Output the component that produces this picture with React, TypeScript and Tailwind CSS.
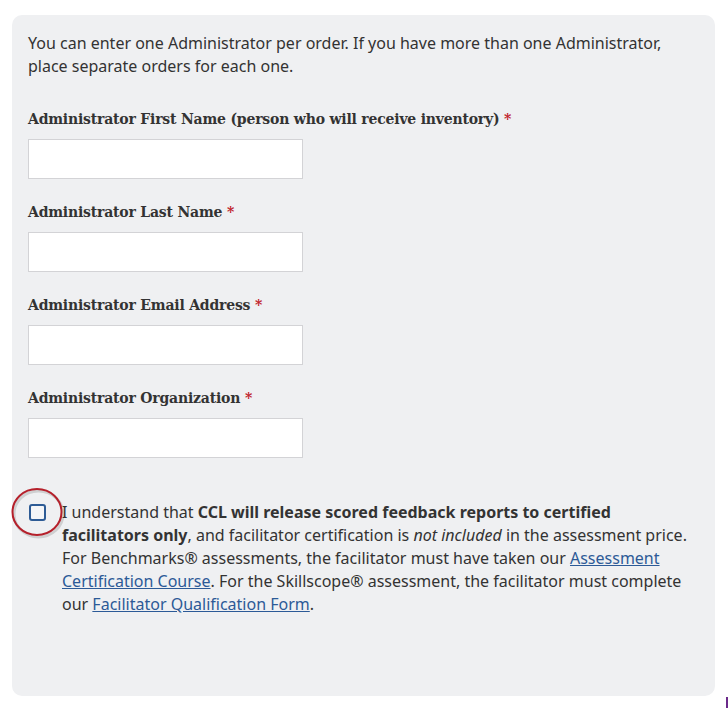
import React from "react"

const labels = [
    "Administrator First Name (person who will receive inventory)",
    "Administrator Last Name",
    "Administrator Email Address",
    "Administrator Organization",
]

const Field: React.FC<{label: string}> = ({label}) => {
    return (
        <div className="flex flex-col">
            <label className="font-['DejaVu_Serif',serif] font-bold text-[14px] leading-[23px] tracking-[-0.2px] text-[#333333]">
                {label} <span className="text-[#c0202a]">*</span>
            </label>
            <input
                type="text"
                className="mt-[8px] h-[40px] w-[275px] bg-white border border-[#d3d3d6] outline-none"
            />
        </div>
    )
}

export default function App() {
    return (
        <div className="relative min-h-[708px] bg-white pl-[12px] pt-[15px] pr-[13px] font-['Noto_Sans',sans-serif] text-[#333333]">
            <div className="h-[681px] w-[703px] rounded-[10px] bg-[#eff0f2] px-[16px] pt-[17px]">
                <p className="text-[16px] leading-[23px]">
                    You can enter one Administrator per order. If you have more than one Administrator, place separate orders for each one.
                </p>

                <div className="mt-[30px] flex flex-col gap-[22px]">
                    {labels.map((l) => (
                        <Field key={l} label={l} />
                    ))}
                </div>

                <div className="mt-[43px] flex items-start gap-[16px]">
                    <div className="relative mt-[3px] ml-[1px] shrink-0">
                        <div className="h-[17px] w-[17px] rounded-[3px] border-2 border-[#2d5b95] bg-[#f4f5f7]" />
                        <svg
                            className="absolute -left-[20px] -top-[19px] pointer-events-none"
                            width="58"
                            height="56"
                            viewBox="0 0 58 56"
                        >
                            <ellipse cx="28" cy="27" rx="24.5" ry="23" fill="none" stroke="#00000022" strokeWidth="3" transform="translate(1.5 2)" />
                            <ellipse cx="28" cy="27" rx="24.5" ry="23" fill="none" stroke="#b5202b" strokeWidth="2" />
                        </svg>
                    </div>
                    <p className="text-[16px] leading-[23px]">
                        I understand that <b>CCL will release scored feedback reports to certified facilitators only</b>, and facilitator certification is <i>not included</i> in the assessment price. For Benchmarks® assessments, the facilitator must have taken our{" "}
                        <a href="#" className="text-[#2c5a97] underline">Assessment Certification Course</a>. For the Skillscope® assessment, the facilitator must complete our{" "}
                        <a href="#" className="text-[#2c5a97] underline">Facilitator Qualification Form</a>.
                    </p>
                </div>
            </div>
            <div className="absolute right-0 bottom-0 h-[11px] w-[2px] bg-[#6b2a8a]" />
        </div>
    )
}
